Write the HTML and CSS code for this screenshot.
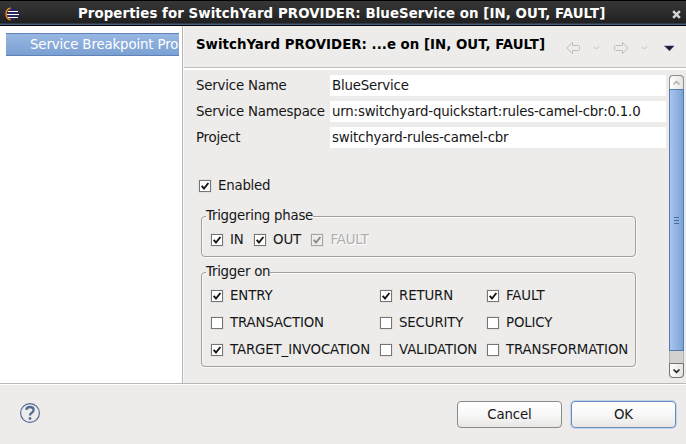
FILE: index.html
```html
<!DOCTYPE html>
<html lang="en">
<head>
<meta charset="utf-8">
<title>Properties for SwitchYard PROVIDER</title>
<link rel="stylesheet" href="styles.css">
</head>
<body>
<svg class="defs" width="0" height="0"><defs>
  <symbol id="tick" viewBox="0 0 12 12"><path d="M2.7 5.8 5 8.6 9.4 3" fill="none" stroke="currentColor" stroke-width="1.9"/></symbol>
</defs></svg>
<div class="window">
  <header class="titlebar">
    <svg class="app-icon" width="15" height="14" viewBox="0 0 15 14">
      <circle cx="7.8" cy="7" r="6" fill="#29265c"/>
      <path d="M5.5 1C-.5 3-.5 11 5.5 13" fill="none" stroke="#ef8b16" stroke-width="1.4"/>
      <path d="M3 4.5h10M2 7.5h12M3 10.500h10" stroke="#fff" stroke-width="1.2"/>
    </svg>
    <h1 class="title">Properties for SwitchYard PROVIDER: BlueService on [IN, OUT, FAULT]</h1>
    <svg class="close" width="9" height="9" viewBox="0 0 8 8"><path d="M1 1l6 6M7 1L1 7" stroke="#d5d5d5" stroke-width="2.2"/></svg>
  </header>
  <div class="content">
    <nav class="sidebar"><div class="nav-item">Service Breakpoint Pro</div></nav>
    <main class="page">
      <div class="page-head">
        <h2 class="page-title">SwitchYard PROVIDER: ...e on [IN, OUT, FAULT]</h2>
        <svg class="nav-tools" width="110" height="16" viewBox="0 0 110 16" fill="none" stroke="#bdbdbb">
          <path d="M.8 8 6.5 2.4V5.5H12.5Q13.5 5.5 13.5 6.5V9.5Q13.5 10.5 12.5 10.5H6.5V13.6Z"/>
          <path d="M28 6.5 30.5 9 33 6.5"/>
          <path d="M62.2 8 56.5 2.4V5.5H49.5Q48.5 5.5 48.5 6.5V9.5Q48.5 10.5 49.5 10.5H56.5V13.6Z"/>
          <path d="M76 6.5 78.5 9 81 6.5"/>
          <path d="M98.500 6H108L103.500 10.800Z" fill="#21182c" stroke="#4c358c" stroke-width=".6"/>
        </svg>
      </div>
      <div class="page-body">
        <div class="form">
          <div class="fields">
            <span class="label">Service Name</span><div class="value">BlueService</div>
            <span class="label">Service Namespace</span><div class="value">urn:switchyard-quickstart:rules-camel-cbr:0.1.0</div>
            <span class="label">Project</span><div class="value">switchyard-rules-camel-cbr</div>
          </div>
          <div class="check enabled"><i class="box"><svg><use href="#tick"/></svg></i><span>Enabled</span></div>
          <section class="group phase">
            <h3 class="legend">Triggering phase</h3>
            <div class="check"><i class="box"><svg><use href="#tick"/></svg></i><span>IN</span></div>
            <div class="check"><i class="box"><svg><use href="#tick"/></svg></i><span>OUT</span></div>
            <div class="check disabled"><i class="box"><svg><use href="#tick"/></svg></i><span>FAULT</span></div>
          </section>
          <section class="group trigger">
            <h3 class="legend">Trigger on</h3>
            <div class="check"><i class="box"><svg><use href="#tick"/></svg></i><span>ENTRY</span></div>
            <div class="check"><i class="box"><svg><use href="#tick"/></svg></i><span>RETURN</span></div>
            <div class="check"><i class="box"><svg><use href="#tick"/></svg></i><span>FAULT</span></div>
            <div class="check"><i class="box"></i><span>TRANSACTION</span></div>
            <div class="check"><i class="box"></i><span>SECURITY</span></div>
            <div class="check"><i class="box"></i><span>POLICY</span></div>
            <div class="check"><i class="box"><svg><use href="#tick"/></svg></i><span>TARGET_INVOCATION</span></div>
            <div class="check"><i class="box"></i><span>VALIDATION</span></div>
            <div class="check"><i class="box"></i><span>TRANSFORMATION</span></div>
          </section>
        </div>
        <div class="scrollbar">
          <div class="step up"><svg width="9" height="6" viewBox="0 0 9 6"><path d="M1.5 4.5 4.5 1.5 7.5 4.5" fill="none" stroke="#aaa" stroke-width="1.3"/></svg></div>
          <div class="thumb"><i></i><i></i><i></i></div>
          <div class="step down"><svg width="9" height="6" viewBox="0 0 9 6"><path d="M1.5 1.5 4.5 4.3 7.5 1.5" fill="none" stroke="#222" stroke-width="1.7"/></svg></div>
        </div>
      </div>
    </main>
  </div>
  <footer class="footer">
    <svg class="help" width="22" height="22" viewBox="0 0 22 22" fill="none" stroke="#536a94">
      <circle cx="11" cy="11" r="9.4" stroke-width="1.2"/>
      <path d="M7.3 7.8Q7.6 5 11 5Q14.6 5 14.6 7.9Q14.6 9.5 12.7 10.7Q11 11.7 11 13.6" stroke-width="2.3"/>
      <circle cx="11" cy="16.5" r="1.4" fill="#536a94" stroke="none"/>
    </svg>
    <button class="button">Cancel</button>
    <button class="button default">OK</button>
  </footer>
</div>
</body>
</html>
```
FILE: styles.css
```css
* { box-sizing: border-box; }
body { margin: 0; font: 13.33px/16px "DejaVu Sans", sans-serif; color: #161616; }
h1, h2, h3 { margin: 0; font-size: inherit; white-space: nowrap; }
svg { display: block; flex: none; }
.defs { position: absolute; }
.window { width: 686px; height: 444px; background: #edeceb; display: flex; flex-direction: column; overflow: hidden; }

.titlebar { height: 26px; flex: none; display: flex; align-items: center; padding: 1px 5px 0 5px; border-top: 1px solid #000; border-bottom: 1px solid #000; background: linear-gradient(#363636, #2c2c2c 50%, #202020 92%, #46617f 96%); color: #fff; }
.title { flex: 1; margin-left: 58px; letter-spacing: .083px; }
.close { margin-top: 1px; }

.content { height: 357px; flex: none; display: flex; }
.sidebar { width: 183px; flex: none; background: #fff; border-right: 1px solid #b7b5b3; padding: 7px 3px 0 6px; }
.nav-item { height: 23px; border: solid #5f83b8; border-width: 1px 0; background: linear-gradient(#98b7e2, #7aa0d2); color: #fff; padding: 3px 0 0 24px; white-space: nowrap; letter-spacing: -.14px; }
.page { flex: 1; min-width: 0; border-left: 1px solid #f8f8f7; }
.page-head { height: 44px; display: flex; padding: 11px 10px 0 12px; border-bottom: 2px solid #fff; box-shadow: inset 0 -1px #bdbcba; justify-content: space-between; color: #000; }
.page-title { letter-spacing: .025px; }
.nav-tools { margin-top: 3px; }
.page-body { display: flex; justify-content: space-between; padding: 5px 2px 0 12px; }
.form { width: 470px; }
.fields { display: grid; grid-template-columns: 134px 336px; grid-auto-rows: 21px; row-gap: 5px; line-height: 22px; letter-spacing: -.185px; }
.value { background: #fff; padding-left: 2px; }
.label { white-space: nowrap; }

.check { display: flex; align-items: center; height: 18px; white-space: nowrap; letter-spacing: -.13px; }
.check span { margin-left: 7px; line-height: 18px; }
.box { width: 12px; height: 12px; flex: none; background: #fff; border: 1px solid #777573; box-shadow: 0 0 0 1px #e3e2e0; }
.box svg { width: 12px; height: 12px; margin: -1px; color: #151515; }
.disabled { color: #b0afad; text-shadow: 1px 1px #fff; }
.disabled .box { background: #edeceb; border-color: #a8a6a4; }
.disabled svg { color: #8d8b89; }
.enabled { margin: 29px 0 0 3px; letter-spacing: -.22px; }

.group { position: relative; width: 435px; margin-left: 5px; border: 1px solid #a09f9d; border-radius: 4px; box-shadow: 1px 1px #faf9f9, inset 1px 1px #faf9f9; }
.legend { position: absolute; left: 4px; top: -9px; background: #edeceb; font-weight: 400; line-height: 16px; letter-spacing: -.25px; }
.phase { height: 41px; margin-top: 21px; padding: 14px 9px 0; display: flex; gap: 10.4px; }
.trigger { height: 95px; margin-top: 15px; padding: 14px 9px 0; display: grid; grid-template-columns: 169px 107px 1fr; grid-auto-rows: 18px; row-gap: 9px; align-content: start; }

.scrollbar { width: 15px; height: 303px; display: flex; flex-direction: column; background: #d3d1cf; border-radius: 4px; box-shadow: inset 0 0 0 1px #b3b1af; }
.step { height: 15px; flex: none; border: 1px solid #92908e; background: linear-gradient(90deg, #fff, #e5e4e2); display: flex; align-items: center; justify-content: center; }
.up { border-radius: 4px 4px 0 0; }
.down { border-radius: 0 0 4px 4px; margin-top: auto; border-color: #777573; }
.thumb { height: 262px; margin-top: -1px; border: 1px solid #567cae; background: linear-gradient(90deg, #a8c6ee, #7ca2d5); display: flex; flex-direction: column; gap: 2px; align-items: center; justify-content: center; }
.thumb i { width: 5px; height: 1px; background: #486c9f; }

.footer { flex: 1; border-top: 1px solid #b8b7b5; box-shadow: inset 0 1px #fff; display: flex; padding: 17px 10px 0 19px; gap: 9px; }
.help { margin: 1px auto 0 0; }
.button { width: 105px; height: 27px; padding: 0; font: inherit; letter-spacing: -.13px; color: #161616; border: 1px solid #8b8987; border-radius: 4px; background: linear-gradient(#fff, #f8f8f8 50%, #e8e7e5); }
.default { border-color: #668bbd; box-shadow: 0 0 0 1px #c4d5ea; }
```
